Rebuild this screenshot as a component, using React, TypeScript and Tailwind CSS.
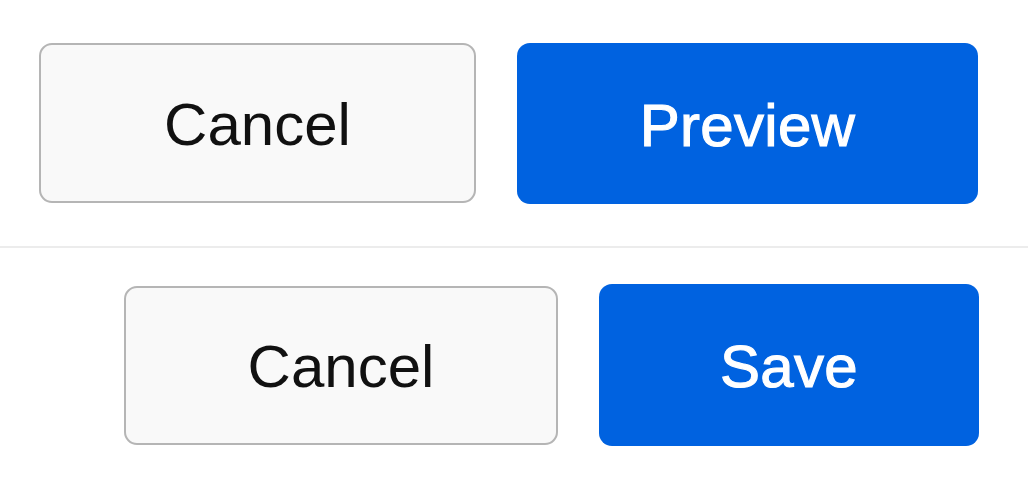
import React from "react";

export default function App() {
  const font = { fontFamily: '"Liberation Sans", Arial, sans-serif' };
  return (
    <div className="w-[1028px] h-[488px] bg-white flex flex-col" style={font}>
      <div className="flex justify-end gap-[41px] pr-[50px] pt-[43px] pb-[42px]">
        <button className="w-[437px] h-[160px] pt-[4px] rounded-[13px] border-2 border-[#b5b5b5] bg-[#f9f9f9] text-[#111111] text-[60px] flex items-center justify-center">
          Cancel
        </button>
        <button className="w-[461px] h-[161px] pt-[4px] rounded-[13px] bg-[#0062e0] text-white text-[60px] tracking-[0.3px] [-webkit-text-stroke:1.1px_white] flex items-center justify-center">
          Preview
        </button>
      </div>
      <div className="h-[2px] bg-[#ececec]" />
      <div className="flex justify-end items-center gap-[41px] pr-[49px] pt-[36px]">
        <button className="w-[434px] h-[159px] pt-[4px] rounded-[13px] border-2 border-[#b5b5b5] bg-[#f9f9f9] text-[#111111] text-[60px] flex items-center justify-center">
          Cancel
        </button>
        <button className="w-[380px] h-[162px] pt-[4px] rounded-[13px] bg-[#0062e0] text-white text-[60px] tracking-[0.3px] [-webkit-text-stroke:1.1px_white] flex items-center justify-center">
          Save
        </button>
      </div>
    </div>
  );
}
